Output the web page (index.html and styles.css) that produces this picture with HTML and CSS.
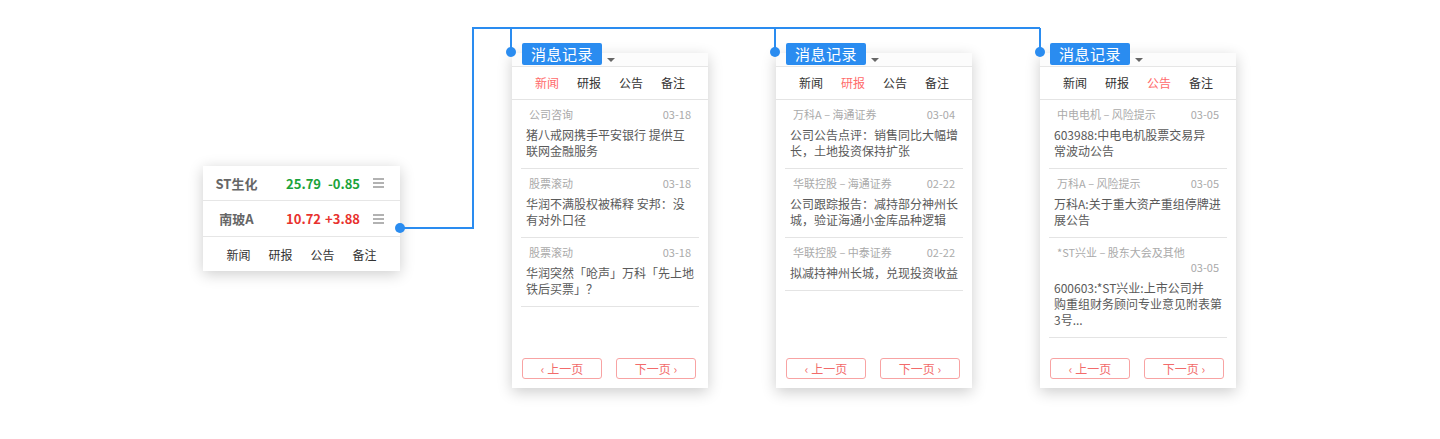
FILE: index.html
```html
<!DOCTYPE html>
<html lang="zh-CN">
  <head>
    <meta charset="UTF-8" />
    <meta name="viewport" content="width=device-width, initial-scale=1.0" />
    <title>消息记录</title>
    <link rel="stylesheet" href="styles.css">
  </head>
  <body>
    <div class="stage">
      <svg class="wires" width="1440" height="439" viewBox="0 0 1440 439">
        <path d="M400 228 H473 V28 H1040 M511 28 V52 M775 28 V52 M1040 28 V52" />
        <circle cx="400" cy="228" r="5" />
        <circle cx="511" cy="52" r="5" />
        <circle cx="775" cy="52" r="5" />
        <circle cx="1040" cy="52" r="5" />
      </svg>

      <div class="quote">
        <div class="quote-row">
          <span class="name">ST生化</span>
          <span class="price down">25.79</span>
          <span class="change down">-0.85</span>
          <svg class="menu" width="11" height="10" viewBox="0 0 11 10"><path d="M0 1h11M0 5h11M0 9h11" /></svg>
        </div>
        <div class="quote-row">
          <span class="name">南玻A</span>
          <span class="price up">10.72</span>
          <span class="change up">+3.88</span>
          <svg class="menu" width="11" height="10" viewBox="0 0 11 10"><path d="M0 1h11M0 5h11M0 9h11" /></svg>
        </div>
        <div class="tabs">
          <span>新闻</span><span>研报</span><span>公告</span><span>备注</span>
        </div>
      </div>

      <div class="panel panel-first">
        <div class="label">消息记录</div>
        <i class="caret"></i>
        <div class="panel-head"></div>
        <div class="tabs tabs-panel">
          <span class="active">新闻</span><span>研报</span><span>公告</span><span>备注</span>
        </div>
        <ul class="items">
          <li>
            <div class="meta"><span class="src">公司咨询</span><span class="date">03-18</span></div>
            <p class="title">猪八戒网携手平安银行 提供互<br>联网金融服务</p>
          </li>
          <li>
            <div class="meta"><span class="src">股票滚动</span><span class="date">03-18</span></div>
            <p class="title">华润不满股权被稀释 安邦：没<br>有对外口径</p>
          </li>
          <li>
            <div class="meta"><span class="src">股票滚动</span><span class="date">03-18</span></div>
            <p class="title">华润突然「呛声」万科「先上地<br>铁后买票」？</p>
          </li>
        </ul>
        <div class="pager">
          <button>‹ 上一页</button><button>下一页 ›</button>
        </div>
      </div>

      <div class="panel">
        <div class="label">消息记录</div>
        <i class="caret"></i>
        <div class="panel-head"></div>
        <div class="tabs tabs-panel">
          <span>新闻</span><span class="active">研报</span><span>公告</span><span>备注</span>
        </div>
        <ul class="items">
          <li>
            <div class="meta"><span class="src">万科A – 海通证券</span><span class="date">03-04</span></div>
            <p class="title">公司公告点评：销售同比大幅增<br>长，土地投资保持扩张</p>
          </li>
          <li>
            <div class="meta"><span class="src">华联控股 – 海通证券</span><span class="date">02-22</span></div>
            <p class="title">公司跟踪报告：减持部分神州长<br>城，验证海通小金库品种逻辑</p>
          </li>
          <li>
            <div class="meta"><span class="src">华联控股 – 中泰证券</span><span class="date">02-22</span></div>
            <p class="title">拟减持神州长城，兑现投资收益</p>
          </li>
        </ul>
        <div class="pager">
          <button>‹ 上一页</button><button>下一页 ›</button>
        </div>
      </div>

      <div class="panel">
        <div class="label">消息记录</div>
        <i class="caret"></i>
        <div class="panel-head"></div>
        <div class="tabs tabs-panel">
          <span>新闻</span><span>研报</span><span class="active">公告</span><span>备注</span>
        </div>
        <ul class="items">
          <li>
            <div class="meta"><span class="src">中电电机 – 风险提示</span><span class="date">03-05</span></div>
            <p class="title">603988:中电电机股票交易异<br>常波动公告</p>
          </li>
          <li>
            <div class="meta"><span class="src">万科A – 风险提示</span><span class="date">03-05</span></div>
            <p class="title">万科A:关于重大资产重组停牌进<br>展公告</p>
          </li>
          <li>
            <div class="meta meta-wrap"><span class="src">*ST兴业 – 股东大会及其他</span><span class="date">03-05</span></div>
            <p class="title">600603:*ST兴业:上市公司并<br>购重组财务顾问专业意见附表第<br>3号...</p>
          </li>
        </ul>
        <div class="pager">
          <button>‹ 上一页</button><button>下一页 ›</button>
        </div>
      </div>
    </div>
  </body>
</html>
```

FILE: styles.css
```css
* {
  box-sizing: border-box;
}
body {
  margin: 0;
  background: #fff;
  font-family: "Noto Sans CJK SC", "Noto Sans", sans-serif;
  color: #555;
  overflow: hidden;
}
.stage {
  position: relative;
  width: 1440px;
  height: 439px;
  display: flex;
  align-items: flex-start;
  padding-left: 203px;
}
.wires {
  position: absolute;
  left: 0;
  top: 0;
  z-index: 5;
  pointer-events: none;
}
.wires path {
  fill: none;
  stroke: #2a8cf0;
  stroke-width: 2;
}
.wires circle {
  fill: #2a8cf0;
}

/* quote card */
.quote {
  width: 197px;
  margin-top: 166px;
  background: #fff;
  box-shadow: 0 3px 14px rgba(0, 0, 0, 0.2);
}
.quote-row {
  display: flex;
  align-items: center;
  height: 36px;
  border-bottom: 1px solid #e6e6e6;
  font-size: 13px;
  font-weight: bold;
}
.quote-row:first-child {
  height: 35px;
}
.quote-row .name {
  width: 67px;
  text-align: center;
  color: #666;
}
.quote-row .price {
  width: 51px;
  text-align: right;
}
.quote-row .change {
  width: 39px;
  text-align: right;
}
.down {
  color: #1ba33a;
}
.up {
  color: #e8322e;
}
.menu {
  margin-left: 13px;
}
.menu path {
  stroke: #999;
  stroke-width: 1.5;
}
.tabs {
  display: flex;
  justify-content: center;
  align-items: center;
  height: 34px;
  font-size: 12px;
  color: #333;
}
.tabs span {
  width: 42px;
  text-align: center;
}

/* message panels */
.panel {
  position: relative;
  width: 196px;
  height: 335px;
  margin-top: 53px;
  margin-left: 68px;
  background: #fff;
  display: flex;
  flex-direction: column;
  box-shadow: 0 4px 14px rgba(0, 0, 0, 0.2);
}
.panel-first {
  margin-left: 112px;
}
.label {
  position: absolute;
  left: 10px;
  top: -10px;
  width: 80px;
  height: 22px;
  line-height: 22px;
  background: #2a8cf0;
  color: #fff;
  font-size: 15px;
  letter-spacing: 0.5px;
  text-align: center;
  border-radius: 2px;
}
.caret {
  position: absolute;
  left: 95px;
  top: 5px;
  border-left: 4px solid transparent;
  border-right: 4px solid transparent;
  border-top: 4px solid #666;
}
.panel-head {
  height: 14px;
  border-bottom: 1px solid #e6e6e6;
  background: #fcfcfc;
}
.tabs-panel {
  height: 33px;
  padding-bottom: 2px;
  border-bottom: 1px solid #e4e4e4;
}
.tabs .active {
  color: #ff6b6b;
}
.items {
  list-style: none;
  margin: 0 9px;
  padding: 0;
}
.items li {
  padding: 7px 8px 9px 5px;
  border-bottom: 1px solid #e4e4e4;
}
.meta {
  display: flex;
  justify-content: space-between;
  height: 14px;
  line-height: 14px;
  font-size: 11px;
  color: #aaa;
}
.meta .src {
  margin-left: 3px;
}
.meta-wrap {
  flex-direction: column;
  height: 29px;
  gap: 1px;
}
.meta-wrap .date {
  align-self: flex-end;
}
.title {
  margin: 6px 0 0;
  font-size: 12px;
  line-height: 16px;
  color: #5a5a5a;
  white-space: nowrap;
}
.pager {
  margin-top: auto;
  display: flex;
  justify-content: space-between;
  padding: 0 12px 9px 10px;
}
.pager button {
  width: 80px;
  height: 21px;
  padding: 0;
  background: #fff;
  border: 1px solid #f8a3a3;
  border-radius: 3px;
  color: #f26b6b;
  font-family: inherit;
  font-size: 12px;
}
```
